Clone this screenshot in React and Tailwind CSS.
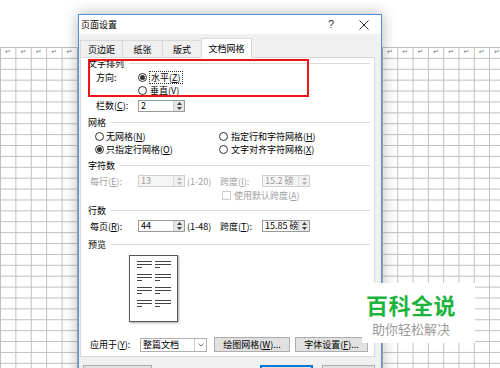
import React from "react";

function Mark() {
  return (
    <span className="font-['DejaVu_Sans',sans-serif] text-[7px] leading-none text-[#7a7a7a]">↵</span>
  );
}

function Radio({ checked }) {
  return (
    <span className="flex h-[9px] w-[9px] shrink-0 items-center justify-center rounded-full border border-[#333] bg-white">
      {checked ? <span className="h-[5px] w-[5px] rounded-full bg-[#333]" /> : null}
    </span>
  );
}

function Spinner({ disabled }) {
  const c = disabled ? "#b5b5b5" : "#444";
  return (
    <span className={"relative flex h-full w-[11px] shrink-0 flex-col items-center justify-center gap-[2px] border-l " + (disabled ? "border-[#dcdcdc] bg-[#f0f0f0]" : "border-[#c8c8c8] bg-[#e6e6e6]")}>
      <svg width="5" height="3" viewBox="0 0 5 3"><path d="M2.5 0L5 3H0z" fill={c} /></svg>
      <svg width="5" height="3" viewBox="0 0 5 3"><path d="M0 0H5L2.5 3z" fill={c} /></svg>
    </span>
  );
}

function NumInput({ value, disabled, width }) {
  return (
    <div className={"flex h-[12px] items-center border " + (disabled ? "border-[#cfcfcf] bg-[#f5f5f5] text-[#9a9a9a]" : "border-[#9a9a9a] bg-white text-black") + " " + width}>
      <span className="min-w-0 flex-1 whitespace-nowrap pl-[2px] leading-[10px]">{value}</span>
      <Spinner disabled={disabled} />
    </div>
  );
}

function GroupHeader({ label }) {
  return (
    <div className="flex h-[11px] items-center pl-[7px] pr-[4px]">
      <span className="leading-none">{label}</span>
      <div className="ml-[5px] h-px flex-1 bg-[#dcdcdc]" />
    </div>
  );
}

function U({ children }) {
  return <span className="underline underline-offset-1">{children}</span>;
}

function PreviewGroup() {
  return (
    <div className="flex gap-[3px]">
      <div className="flex w-[15px] flex-col gap-[2px]">
        <div className="h-px w-[15px] bg-[#444]" />
        <div className="h-px w-[15px] bg-[#444]" />
        <div className="h-px w-[5px] bg-[#444]" />
      </div>
      <div className="flex w-[16px] flex-col gap-[2px]">
        <div className="h-px w-[16px] bg-[#444]" />
        <div className="h-px w-[16px] bg-[#444]" />
        <div className="h-px w-[5px] bg-[#444]" />
      </div>
    </div>
  );
}

export default function App() {
  const left = [0, 1, 2, 3, 4];
  const right = [0, 1, 2, 3, 4, 5, 6, 7];
  return (
    <div className="relative flex h-[368px] w-[500px] overflow-hidden bg-white font-['Noto_Sans_CJK_SC',sans-serif] text-[9px] text-black">
      {/* left document grid */}
      <div className="mt-[47px] w-[78px] shrink-0 bg-[linear-gradient(to_right,#c0c0c0_1px,transparent_1px),linear-gradient(to_bottom,#c0c0c0_1px,transparent_1px)] bg-[size:15.4px_10.9px]">
        <div className="flex h-[11px]">
          {left.map((i) => (
            <div key={i} className="flex w-[15.4px] shrink-0 items-center pl-[5px]">
              <Mark />
            </div>
          ))}
        </div>
      </div>

      {/* dialog */}
      <div className="relative z-10 mt-[14px] flex w-[304px] shrink-0 flex-col self-start border border-[#4a90d9] bg-[#f0f0f0] shadow-[0_0_14px_rgba(0,0,0,0.3)]">
        {/* title bar */}
        <div className="flex h-[19px] items-center bg-white pl-[2px]">
          <span className="leading-none">页面设置</span>
          <span className="ml-auto font-['Liberation_Sans',sans-serif] text-[11px] leading-none text-[#333]">?</span>
          <svg className="ml-[25px] mr-[12px]" width="10" height="10" viewBox="0 0 10 10">
            <path d="M0.5 0.5L9.5 9.5M9.5 0.5L0.5 9.5" stroke="#333" strokeWidth="1" />
          </svg>
        </div>

        {/* tabs */}
        <div className="flex h-[23px] items-end pl-[1px]">
          <div className="flex h-[17px] w-[42px] items-center justify-center border-l border-t border-[#d9d9d9] leading-none">页边距</div>
          <div className="flex h-[17px] w-[40px] items-center justify-center border-l border-t border-[#d9d9d9] leading-none">纸张</div>
          <div className="flex h-[17px] w-[39px] items-center justify-center border-l border-t border-[#d9d9d9] leading-none">版式</div>
          <div className="relative z-10 -mb-px flex h-[20px] w-[51px] items-center justify-center border-x border-t border-[#d9d9d9] bg-white pb-[1px] leading-none">文档网格</div>
        </div>

        {/* panel */}
        <div className="relative ml-[1px] flex h-[300px] w-[295px] flex-col border border-[#d9d9d9] bg-white">
          <div className="flex h-[10px] items-center pl-[7px] pr-[4px]">
            <span className="leading-none">文字排列</span>
            <div className="ml-[5px] h-px flex-1 bg-[#dcdcdc]" />
          </div>

          <div className="mt-[3px] flex h-[13px] items-center pl-[15px]">
            <span className="w-[42px] leading-none">方向:</span>
            <Radio checked />
            <span className="ml-[2px] border border-dotted border-[#333] px-[1px] py-[1px] leading-none">水平(<U>Z</U>)</span>
          </div>
          <div className="flex h-[12px] items-center pl-[57px]">
            <Radio />
            <span className="ml-[3px] leading-none">垂直(<U>V</U>)</span>
          </div>

          <div className="mt-[3px] flex h-[13px] items-center pl-[15px]">
            <span className="w-[42px] leading-none">栏数(<U>C</U>):</span>
            <NumInput value="2" width="w-[47px]" />
          </div>

          <div className="mt-[5px]">
            <GroupHeader label="网格" />
          </div>
          <div className="mt-[2px] flex h-[12px] items-center">
            <div className="flex w-[138px] items-center pl-[14px]">
              <Radio />
              <span className="ml-[2px] leading-none">无网格(<U>N</U>)</span>
            </div>
            <div className="flex items-center">
              <Radio />
              <span className="ml-[3px] leading-none">指定行和字符网格(<U>H</U>)</span>
            </div>
          </div>
          <div className="mt-[1px] flex h-[12px] items-center">
            <div className="flex w-[138px] items-center pl-[14px]">
              <Radio checked />
              <span className="ml-[2px] leading-none">只指定行网格(<U>O</U>)</span>
            </div>
            <div className="flex items-center">
              <Radio />
              <span className="ml-[3px] leading-none">文字对齐字符网格(<U>X</U>)</span>
            </div>
          </div>

          <div className="mt-[5px]">
            <GroupHeader label="字符数" />
          </div>
          <div className="mt-[4px] flex h-[12px] items-center pl-[9px] text-[#a0a0a0]">
            <span className="w-[48px] leading-none">每行(<U>E</U>):</span>
            <NumInput value="13" disabled width="w-[47px]" />
            <span className="ml-[2px] w-[33px] leading-none">(1-20)</span>
            <span className="w-[42px] leading-none">跨度(<U>I</U>):</span>
            <NumInput value="15.2 磅" disabled width="w-[48px]" />
          </div>
          <div className="mt-[2px] flex h-[12px] items-center pl-[141px] text-[#a0a0a0]">
            <span className="h-[9px] w-[9px] border border-[#cccccc] bg-white" />
            <span className="ml-[3px] leading-none">使用默认跨度(<U>A</U>)</span>
          </div>

          <div className="mt-[4px]">
            <GroupHeader label="行数" />
          </div>
          <div className="mt-[4px] flex h-[12px] items-center pl-[9px]">
            <span className="w-[48px] leading-none">每页(<U>R</U>):</span>
            <NumInput value="44" width="w-[47px]" />
            <span className="ml-[2px] w-[33px] leading-none">(1-48)</span>
            <span className="w-[42px] leading-none">跨度(<U>T</U>):</span>
            <NumInput value="15.85 磅" width="w-[48px]" />
          </div>

          <div className="mt-[7px]">
            <GroupHeader label="预览" />
          </div>
          <div className="ml-[48px] mt-[5px] flex h-[67px] w-[49px] flex-col gap-[6px] border border-[#555] bg-white pl-[7px] pt-[5px] shadow-[1px_1px_2px_rgba(0,0,0,0.35)]">
            <PreviewGroup />
            <PreviewGroup />
            <PreviewGroup />
            <PreviewGroup />
          </div>

          <div className="mt-[15px] flex h-[15px] items-center pl-[9px]">
            <span className="w-[50px] leading-none">应用于(<U>Y</U>):</span>
            <div className="flex h-[14px] w-[67px] items-center border border-[#b0b0b0] bg-white">
              <span className="flex-1 pl-[2px] leading-none">整篇文档</span>
              <span className="flex h-full w-[12px] items-center justify-center border-l border-[#d0d0d0]">
                <svg width="6" height="4" viewBox="0 0 6 4"><path d="M0.5 0.5L3 3L5.5 0.5" fill="none" stroke="#555" strokeWidth="0.8" /></svg>
              </span>
            </div>
            <div className="ml-[7px] flex h-[15px] w-[76px] items-center justify-center border border-[#adadad] bg-[#e1e1e1] leading-none">绘图网格(<U>W</U>)...</div>
            <div className="ml-[5px] flex h-[15px] w-[73px] items-center justify-center border border-[#adadad] bg-[#e1e1e1] leading-none">字体设置(<U>F</U>)...</div>
          </div>

          {/* red annotation box */}
          <div className="absolute left-[7px] top-[1px] h-[38px] w-[221px] border-2 border-[#f01414]" />
        </div>

        {/* bottom buttons (cut off) */}
        <div className="mt-[8px] flex h-[22px] items-start pl-[4px]">
          <div className="h-[22px] w-[69px] border border-[#adadad] bg-[#e1e1e1]" />
          <div className="ml-auto h-[22px] w-[53px] border-2 border-[#0078d7] bg-[#e1e1e1]" />
          <div className="ml-[9px] mr-[6px] h-[22px] w-[53px] border border-[#adadad] bg-[#e1e1e1]" />
        </div>
      </div>

      {/* right document grid */}
      <div className="mt-[47px] flex-1 bg-[linear-gradient(to_right,#c0c0c0_1px,transparent_1px),linear-gradient(to_bottom,#c0c0c0_1px,transparent_1px)] bg-[size:15.3px_10.9px]">
        <div className="flex h-[11px]">
          {right.map((i) => (
            <div key={i} className="flex w-[15.3px] shrink-0 items-center pl-[5px]">
              <Mark />
            </div>
          ))}
        </div>
      </div>

      {/* watermark */}
      <div className="absolute left-[362px] top-[283px] z-20 flex h-[60px] w-[113px] flex-col bg-white pl-[4px] pt-[8px]">
        <span className="text-[22px] font-bold leading-[26px] tracking-[0.5px] text-[#1cb43c]">百科全说</span>
        <span className="ml-[6px] mt-[4px] text-[13px] leading-[16px] text-[#9a9a9a]">助你轻松解决</span>
      </div>
    </div>
  );
}
